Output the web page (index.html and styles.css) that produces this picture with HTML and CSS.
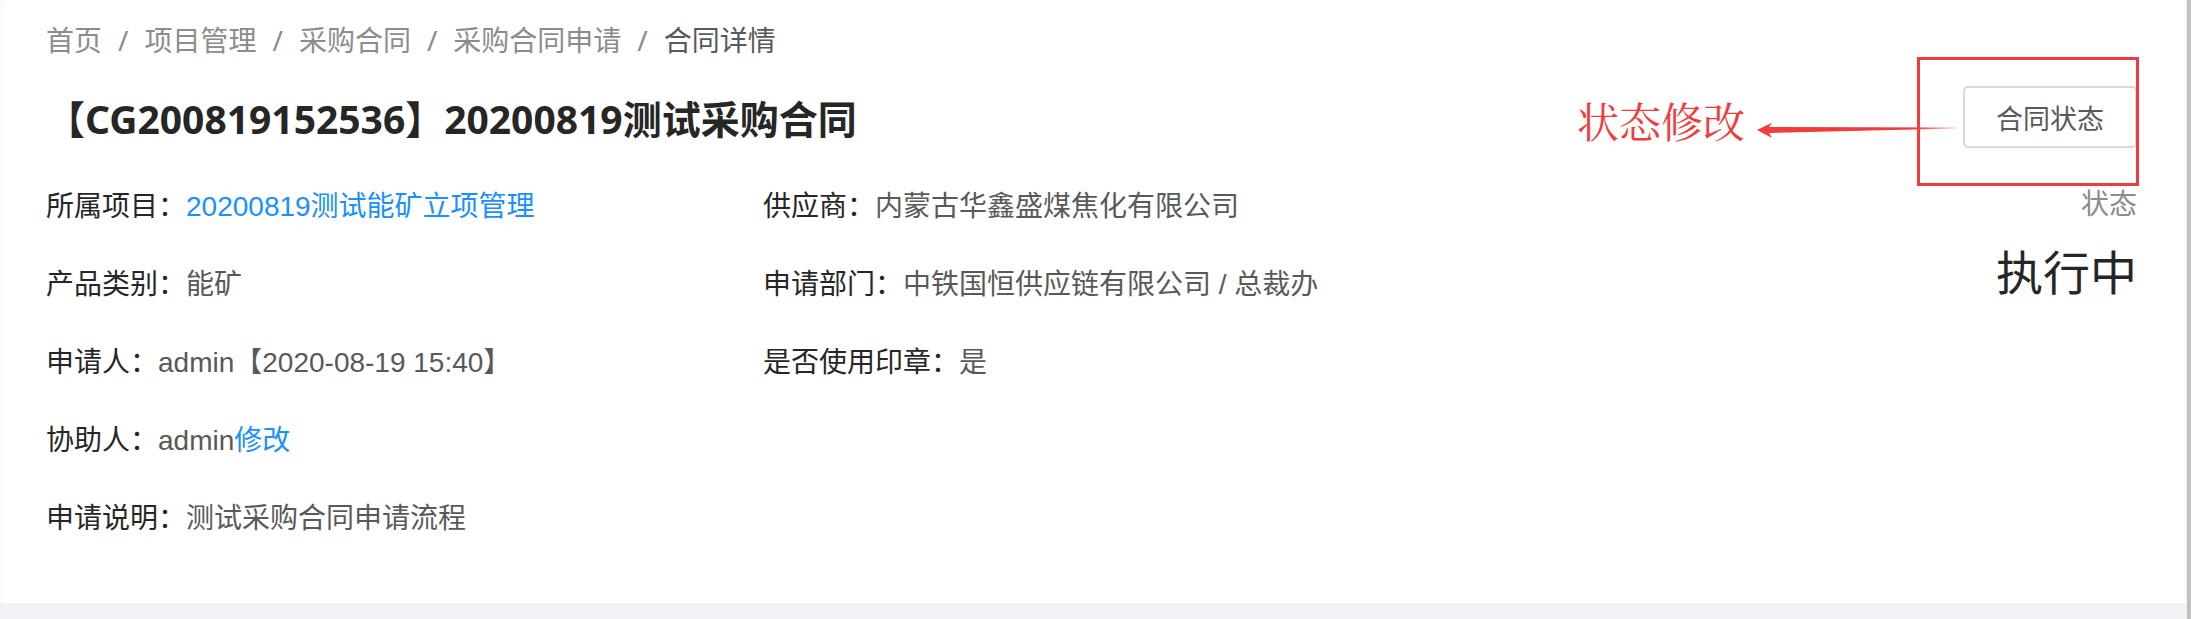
FILE: index.html
```html
<!DOCTYPE html>
<html lang="zh-CN">
<head>
    <meta charset="UTF-8">
    <meta name="viewport" content="width=device-width, initial-scale=1.0">
    <title>合同详情</title>
    <link rel="stylesheet" href="styles.css">
</head>
<body>
    <div class="app">
        <div class="main">
            <div class="page-header">
                <div class="breadcrumb">
                    <span class="crumb">首页</span><span class="sep">/</span>
                    <span class="crumb">项目管理</span><span class="sep">/</span>
                    <span class="crumb">采购合同</span><span class="sep">/</span>
                    <span class="crumb">采购合同申请</span><span class="sep">/</span>
                    <span class="crumb current">合同详情</span>
                </div>

                <div class="heading">
                    <h1 class="title">【CG200819152536】20200819测试采购合同</h1>
                    <div class="btn-wrap">
                        <button class="btn">合同状态</button>
                        <!-- annotation drawn over the screenshot -->
                        <div class="mark-box"></div>
                        <div class="mark-text">状态修改</div>
                        <svg class="mark-arrow" width="205" height="24" viewBox="0 0 205 24">
                            <defs>
                                <linearGradient id="fade" x1="0" y1="0" x2="1" y2="0">
                                    <stop offset="0" stop-color="#f23b3b"/>
                                    <stop offset="0.8" stop-color="#f23b3b"/>
                                    <stop offset="1" stop-color="#f23b3b" stop-opacity="0.3"/>
                                </linearGradient>
                            </defs>
                            <polygon fill="url(#fade)" points="2,12 17,4.7 14,9 200,9.6 200,10.4 14,15 17,20"/>
                        </svg>
                    </div>
                </div>

                <div class="content">
                    <div class="desc">
                        <div class="item"><span class="label">所属项目：</span><a class="link">20200819测试能矿立项管理</a></div>
                        <div class="item"><span class="label">供应商：</span><span class="value">内蒙古华鑫盛煤焦化有限公司</span></div>
                        <div class="item"><span class="label">产品类别：</span><span class="value">能矿</span></div>
                        <div class="item"><span class="label">申请部门：</span><span class="value">中铁国恒供应链有限公司 / 总裁办</span></div>
                        <div class="item"><span class="label">申请人：</span><span class="value">admin【2020-08-19 15:40】</span></div>
                        <div class="item"><span class="label">是否使用印章：</span><span class="value">是</span></div>
                        <div class="item"><span class="label">协助人：</span><span class="value">admin</span><a class="link">修改</a></div>
                        <div class="item"></div>
                        <div class="item"><span class="label">申请说明：</span><span class="value">测试采购合同申请流程</span></div>
                    </div>
                    <div class="extra">
                        <div class="stat-title">状态</div>
                        <div class="stat-value">执行中</div>
                    </div>
                </div>
            </div>
        </div>
        <div class="scrollbar"></div>
    </div>
</body>
</html>
```

FILE: styles.css
```css
body {
    margin: 0;
    background: #f0f2f5;
    font-family: "Noto Sans", "Noto Sans CJK SC", sans-serif;
    font-size: 28px;
    color: #595959;
}
.app {
    display: flex;
    height: 619px;
}
.main {
    flex: 1;
}
.page-header {
    height: 603px;
    box-sizing: border-box;
    background: #fff;
    padding: 20px 49px 0 46px;
    box-shadow: inset 5px 0 5px -3px rgba(0,0,0,0.04);
}
.breadcrumb {
    display: flex;
    line-height: 41px;
    color: #8c8c8c;
}
.sep {
    margin: 0 16px;
}
.crumb.current {
    color: #595959;
}
.heading {
    display: flex;
    align-items: center;
    justify-content: space-between;
    margin-top: 25px;
    height: 62px;
}
.title {
    margin: 4px 0 0;
    font-size: 39px;
    font-weight: 700;
    line-height: 58px;
    color: #262626;
}
.btn-wrap {
    position: relative;
}
.btn {
    display: block;
    width: 174px;
    height: 62px;
    padding: 0;
    background: #fff;
    border: 2px solid #d9d9d9;
    border-radius: 5px;
    box-shadow: 0 3px 0 rgba(0,0,0,0.02);
    font-family: inherit;
    font-size: 27px;
    color: #595959;
    cursor: pointer;
}
.mark-box {
    position: absolute;
    left: -46px;
    top: -29px;
    width: 222px;
    height: 129px;
    box-sizing: border-box;
    border: 3px solid #f23b3b;
}
.mark-text {
    position: absolute;
    right: 392px;
    top: 12px;
    font-family: "Noto Serif CJK SC", "Noto Sans CJK SC", serif;
    font-size: 42px;
    line-height: 44px;
    color: #f23b3b;
    white-space: nowrap;
}
.mark-arrow {
    position: absolute;
    left: -208px;
    top: 32px;
}
.content {
    display: flex;
    margin-top: 38px;
}
.desc {
    display: grid;
    grid-template-columns: 717px 717px;
    font-family: "Liberation Sans", "Noto Sans CJK SC", sans-serif;
}
.item {
    line-height: 41px;
    padding-bottom: 37px;
    white-space: nowrap;
}
.label {
    color: #262626;
}
.value {
    color: #595959;
}
.link {
    color: #1890ff;
    cursor: pointer;
}
.extra {
    flex: 1;
    text-align: right;
}
.stat-title {
    margin-top: -3px;
    line-height: 41px;
    color: #8c8c8c;
}
.stat-value {
    margin-top: 20px;
    font-size: 47px;
    line-height: 56px;
    color: #262626;
}
.scrollbar {
    width: 4px;
    background: #c1c1c1;
    border-left: 1px solid #ececec;
}
```
